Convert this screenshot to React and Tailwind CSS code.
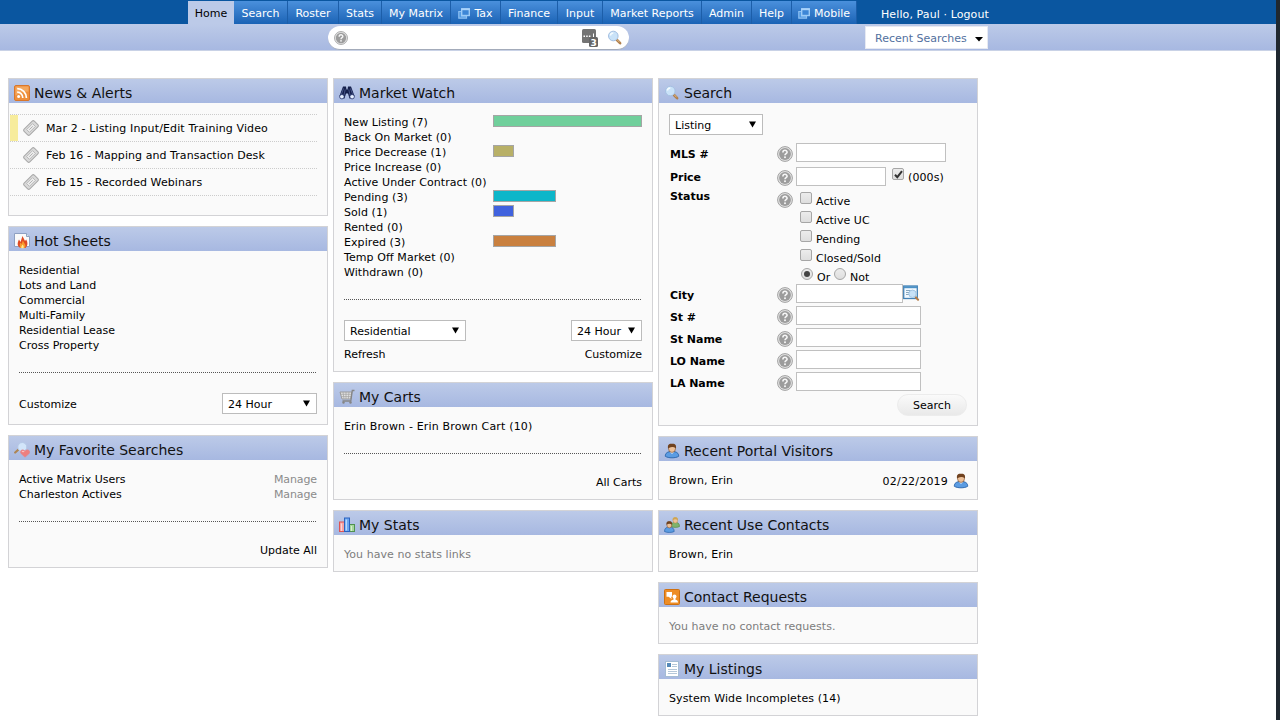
import { useState } from "react";

const tabs = [
  { label: "Home", width: "w-[46px]", active: true },
  { label: "Search", width: "w-[54px]" },
  { label: "Roster", width: "w-[51px]" },
  { label: "Stats", width: "w-[43px]" },
  { label: "My Matrix", width: "w-[69px]" },
  { label: "Tax", width: "w-[50px]", popup: true },
  { label: "Finance", width: "w-[57px]" },
  { label: "Input", width: "w-[45px]" },
  { label: "Market Reports", width: "w-[99px]" },
  { label: "Admin", width: "w-[50px]" },
  { label: "Help", width: "w-[40px]" },
  { label: "Mobile", width: "w-[65px]", popup: true },
];

const news = [
  { text: "Mar 2 - Listing Input/Edit Training Video", tracking: "tracking-[0.13px]", isNew: true },
  { text: "Feb 16 - Mapping and Transaction Desk", tracking: "tracking-[0.06px]" },
  { text: "Feb 15 - Recorded Webinars", tracking: "tracking-[0.08px]" },
];

const hotSheets = [
  "Residential",
  "Lots and Land",
  "Commercial",
  "Multi-Family",
  "Residential Lease",
  "Cross Property",
];

const market = [
  { label: "New Listing", count: 7, width: 149, color: "#70cf9b" },
  { label: "Back On Market", count: 0 },
  { label: "Price Decrease", count: 1, width: 21, color: "#b8b067" },
  { label: "Price Increase", count: 0 },
  { label: "Active Under Contract", count: 0 },
  { label: "Pending", count: 3, width: 63, color: "#0db6c9" },
  { label: "Sold", count: 1, width: 21, color: "#4062de" },
  { label: "Rented", count: 0 },
  { label: "Expired", count: 3, width: 63, color: "#c9803f" },
  { label: "Temp Off Market", count: 0 },
  { label: "Withdrawn", count: 0 },
];

function PopupIcon() {
  return (
    <svg width="12" height="11" viewBox="0 0 12 11" className="mr-1 shrink-0">
      <path d="M.8 3.500v6.700h7.700V8H3.500V3.500z" fill="#4f98e2" stroke="#8cc0f2" strokeWidth="1.200" />
      <rect x="3.700" y="1" width="7.600" height="6.500" fill="#3d86d6" stroke="#9ccbf7" strokeWidth="1.400" />
      <path d="M3.200 1.200h8.600" stroke="#a9d3fa" strokeWidth="2" />
    </svg>
  );
}

function HelpIcon({ size = 16 }) {
  return (
    <svg width={size} height={size} viewBox="0 0 16 16" className="block shrink-0">
      <circle cx="8" cy="8" r="7.400" fill="#e4e4e4" stroke="#999" strokeWidth="0.900" />
      <circle cx="8" cy="8" r="5.900" fill="#9c9c9c" />
      <path
        d="M5.900 6.500c0-2.900 4.200-2.800 4.200-.3C10.100 7.700 8 7.600 8 9.300"
        fill="none"
        stroke="#f6f6f6"
        strokeWidth="1.600"
      />
      <rect x="7.100" y="10.400" width="1.800" height="1.700" fill="#f6f6f6" />
    </svg>
  );
}

function MagnifierIcon() {
  return (
    <svg width="16" height="16" viewBox="0 0 16 16" className="block shrink-0">
      <path d="M9.500 9.500l3.600 3.700" stroke="#b07f4c" strokeWidth="2.600" strokeLinecap="round" />
      <path d="M9.800 9.300l2.800 3" stroke="#dfba85" strokeWidth="1" />
      <circle cx="6.300" cy="6" r="4.800" fill="#c9e2f8" stroke="#a5c0e2" strokeWidth="1" />
      <path d="M3.300 5.500a3.200 3.200 0 0 1 3-2.500" stroke="#f4fbff" strokeWidth="1.500" fill="none" />
    </svg>
  );
}

function RssIcon() {
  return (
    <svg width="16" height="16" viewBox="0 0 16 16">
      <rect x=".5" y=".5" width="15" height="15" rx="1.500" fill="#ee8f3c" stroke="#d9772c" />
      <path d="M1.500 1.500h13v5q-7 0-13 4z" fill="#f6b26e" opacity=".7" />
      <circle cx="4.600" cy="11.500" r="1.500" fill="#fff" />
      <path d="M3.200 7.200a5.600 5.600 0 0 1 5.600 5.800M3.200 3.700a9.200 9.200 0 0 1 9.200 9.300" fill="none" stroke="#fff" strokeWidth="1.700" />
    </svg>
  );
}

function FlameIcon() {
  return (
    <svg width="16" height="16" viewBox="0 0 16 16">
      <path d="M.5.500h12l3 3v10H.5z" fill="#fafafa" stroke="#8ea0c2" />
      <path d="M12.500.500v3h3" fill="#d5dfec" stroke="#8fa2c0" />
      <path d="M5.500 14.500C2.500 12 4 8.500 5 6.500l1.500 2.500L8.500 3l2.500 5 1.200-1.500c1.800 3 1.800 6-.7 8.500z" fill="#df4a22" />
      <path d="M6.500 15C5 13 6 10.500 6.500 9.500l1.200 1.500 1.100-3.500 2 3.500c1.200 1.500.7 3-.3 4z" fill="#f79a2c" />
      <path d="M7.500 15.300c-.8-1.300.2-2.500 1.100-3.800 1.200 1.500 1.400 2.500.9 3.800z" fill="#ffe98c" />
    </svg>
  );
}

function FavoriteIcon() {
  return (
    <svg width="16" height="16" viewBox="0 0 16 16">
      <path d="M4.500 7.500L1.200 10.500" stroke="#ae8554" strokeWidth="2.200" strokeLinecap="round" />
      <circle cx="8.300" cy="5" r="4.500" fill="#d2e5fa" stroke="#b5c8e6" />
      <path d="M11 15.200L6.700 11.200c-1.200-2.800 2-4.700 4.300-2.200 2.300-2.500 5.700-.5 4.500 2.200z" fill="#ee7f7f" stroke="#e08790" strokeWidth=".5" />
      <path d="M8 9.700q1-.9 2.200.2" stroke="#fac1c0" strokeWidth="1.200" fill="none" />
    </svg>
  );
}

function BinocularsIcon() {
  return (
    <svg width="16" height="16" viewBox="0 0 16 16">
      <path d="M4 1.500h3l.5 3h1l.5-3h3L15.500 11 14 13.500h-3.500L9 8.500H7L5.500 13.500H2L.5 11z" fill="#15204c" />
      <path d="M4.500 3.500L2.300 9.500M6.200 4.500l-1.300 6M11.500 3.500l2.200 6M9.800 4.500l1.300 6" stroke="#6a7bb0" strokeWidth=".6" />
      <ellipse cx="2.900" cy="11.700" rx="2.300" ry="2.200" fill="#e5efff" stroke="#26356c" strokeWidth=".8" />
      <ellipse cx="13.100" cy="11.700" rx="2.300" ry="2.200" fill="#e5efff" stroke="#26356c" strokeWidth=".8" />
    </svg>
  );
}

function CartIcon() {
  return (
    <svg width="16" height="16" viewBox="0 0 16 16">
      <path d="M1 3h11.800l-1 7H3z" fill="#e2e2e2" stroke="#9a9a9a" />
      <path d="M1.500 5.300h11M2.300 7.600h9.700M4 3l1 7M7 3v7M10 3l-.7 7" stroke="#a2a2a2" strokeWidth=".7" />
      <path d="M15.500 1.500h-2.200l-1.500 10.500H3.500" fill="none" stroke="#858585" strokeWidth="1.300" />
      <circle cx="4.500" cy="13.500" r="1.200" fill="#858585" />
      <circle cx="11.500" cy="13.500" r="1.200" fill="#858585" />
    </svg>
  );
}

function StatsIcon() {
  return (
    <svg width="16" height="16" viewBox="0 0 16 16">
      <rect x=".5" y="5" width="5" height="9.500" fill="#f6a3a3" stroke="#de5252" />
      <rect x="10.500" y="7.500" width="5" height="7" fill="#a5d79c" stroke="#4f9150" />
      <rect x="5.500" y="1" width="5" height="13.500" fill="#6ba6f2" stroke="#2b63bf" />
      <path d="M7.300 2.500v11" stroke="#bcdcff" strokeWidth="1.300" />
      <path d="M2.500 6.500v7.500M12.500 9v5" stroke="#fff" strokeWidth=".8" opacity=".7" />
    </svg>
  );
}

function PersonIcon() {
  return (
    <svg width="16" height="16" viewBox="0 0 16 16" className="block shrink-0">
      <path d="M1.300 13.300c0-3.200 2-4.800 6.700-4.800s6.700 1.600 6.700 4.800c-3 2-10.400 2-13.400 0z" fill="#5b9ce2" stroke="#2862a8" strokeWidth=".9" />
      <path d="M5.500 8.500l2.500 2.500 2.500-2.500z" fill="#e5f0fc" />
      <ellipse cx="8" cy="5.600" rx="3.500" ry="3.800" fill="#edc19a" stroke="#724322" strokeWidth=".6" />
      <path d="M4 5.500C3.300.600 6 .7 8 .7s4.700-.1 4 4.800Q10.500 4 8 4.100T4 5.500z" fill="#70421f" />
    </svg>
  );
}

function PeopleIcon() {
  return (
    <svg width="16" height="16" viewBox="0 0 16 16">
      <path d="M7 9.500c0-3 1.500-4.200 4.200-4.200S15.500 6.500 15.500 9.500c-2 1.200-6.500 1.200-8.500 0z" fill="#7fb36c" stroke="#568948" strokeWidth=".7" />
      <ellipse cx="11.300" cy="3.400" rx="2.300" ry="2.700" fill="#edc19a" stroke="#b88d45" strokeWidth=".5" />
      <path d="M8.700 3.300C8.500.2 10 .3 11.300.3s2.800 0 2.600 3q-2.600-2-5.200 0z" fill="#d0a650" />
      <path d="M.5 14.500C.5 11.500 2 10 5.300 10s4.900 1.500 4.900 4.500c-2.300 1.300-7.400 1.300-9.700 0z" fill="#5b9ce2" stroke="#2862a8" strokeWidth=".7" />
      <ellipse cx="5.300" cy="7.900" rx="2.500" ry="3" fill="#edc19a" stroke="#724322" strokeWidth=".5" />
      <path d="M2.500 7.800c-.3-3.400 1.200-3.500 2.800-3.500s3.100.1 2.800 3.500q-2.800-2-5.600 0z" fill="#70421f" />
    </svg>
  );
}

function RequestsIcon() {
  return (
    <svg width="16" height="16" viewBox="0 0 16 16">
      <rect x=".5" y=".5" width="15" height="15" rx="1" fill="#ee8d25" stroke="#ce7011" />
      <path d="M2.500 3h5.500v4.700H7l.8 2.300L4.500 7.700h-2z" fill="#fff" />
      <circle cx="10.500" cy="7.500" r="2" fill="#fff" />
      <path d="M6.500 13.500c0-2 1.500-2.500 3-2.800V9h2v1.700c1.500.3 2.500.8 2.500 2.800z" fill="#fff" />
    </svg>
  );
}

function ListingsIcon() {
  return (
    <svg width="16" height="16" viewBox="0 0 16 16">
      <rect x="1.500" y=".5" width="13" height="15" fill="#fff" stroke="#a4bcd4" />
      <rect x="3" y="2" width="4" height="4" fill="#5589b9" />
      <path d="M8 3.500h5M8 5.500h5M4 8.500h9M4 10.500h9M4 12.500h9" stroke="#b4c7d9" />
    </svg>
  );
}

function LookupIcon() {
  return (
    <svg width="17" height="17" viewBox="0 0 17 17" className="block shrink-0">
      <rect x=".7" y="2" width="13.600" height="12.500" fill="#f2f9ff" stroke="#4482b6" strokeWidth="1.300" />
      <path d="M1 3.200h13" stroke="#4c91c6" strokeWidth="2" />
      <path d="M3 6.500h8M3 8.500h3M3 10.500h3" stroke="#87a6be" />
      <path d="M12.500 13l2.600 2.800" stroke="#b47c49" strokeWidth="2" strokeLinecap="round" />
      <circle cx="9.500" cy="9.800" r="3.700" fill="#c7e2f8" stroke="#a3c6e4" />
    </svg>
  );
}

function TicketIcon() {
  return (
    <svg width="16" height="16" viewBox="0 0 16 16" className="block shrink-0">
      <g transform="rotate(-45 8 8)">
        <rect x=".8" y="4" width="14.400" height="8" rx="1.500" fill="#dadada" stroke="#a8a8a8" />
        <rect x="3.800" y="6" width="8.400" height="4" fill="#ededed" stroke="#b0b0b0" strokeWidth=".8" />
        <path d="M5.500 8h5" stroke="#a8a8a8" strokeWidth=".8" />
      </g>
    </svg>
  );
}

function Panel({ title, icon, height, children }) {
  return (
    <section className={`${height} flex flex-col border border-[#d3d3d6] bg-[#fafafa]`}>
      <h2 className="flex h-6 shrink-0 items-center bg-linear-to-b from-[#bccae8] to-[#a7b8e1] pl-[5px] pt-1 text-[14px] leading-5 text-[#111]">
        <span className="mr-1 h-4 w-4 shrink-0">{icon}</span>
        {title}
      </h2>
      <div className="flex flex-1 flex-col px-[10px] pt-[12px]">{children}</div>
    </section>
  );
}

function Divider() {
  return (
    <div className="mt-[19px] h-px shrink-0 bg-[repeating-linear-gradient(90deg,#555_0_1px,transparent_1px_2px)]" />
  );
}

function Select({ value, className }) {
  return (
    <button className={`flex h-[21px] items-center justify-between border border-[#bcbcbc] bg-white pl-[5px] pr-[6px] ${className}`}>
      <span className="pt-0.5">{value}</span>
      <svg width="7" height="7" viewBox="0 0 7 7" className="mb-px">
        <path d="M0 .5h7L3.500 6.500z" fill="#000" />
      </svg>
    </button>
  );
}

function Box({ round, checked, onClick }) {
  return (
    <button
      onClick={onClick}
      className={`flex h-3 w-3 shrink-0 items-center justify-center border border-[#a6a6a6] bg-linear-to-b from-[#ececec] to-[#dedede] ${round ? "rounded-full" : "rounded-[2px]"}`}
    >
      {checked && round && <span className="h-1.5 w-1.5 rounded-full bg-[#444]" />}
      {checked && !round && (
        <svg width="9" height="9" viewBox="0 0 9 9">
          <path d="M1 4.700l2.300 2.500L8 1.200" fill="none" stroke="#333" strokeWidth="2" />
        </svg>
      )}
    </button>
  );
}

function Field({ label, height = "h-[22px]", labelPad = "pt-1", iconPad = "pt-[3px]", children }) {
  return (
    <div className={`grid grid-cols-[107px_19px_1fr] pl-px ${height}`}>
      <span className={`font-bold tracking-[-0.05px] ${labelPad}`}>{label}</span>
      <span className={iconPad}>
        <HelpIcon />
      </span>
      <div>{children}</div>
    </div>
  );
}

function Input({ className }) {
  return <input className={`block h-[19px] border border-[#c0c0c0] bg-white outline-none ${className}`} />;
}

function Header() {
  return (
    <header>
      <div className="flex h-6 items-end bg-[#0a56a0] pl-[188px] text-white">
        {tabs.map((tab) => (
          <a
            key={tab.label}
            className={`flex h-[23px] shrink-0 items-center justify-center whitespace-nowrap pt-px ${tab.width} ${
              tab.active
                ? "bg-[#bccae8] text-black"
                : "border-r border-[#1c5ea9] bg-linear-to-b from-[#4a90dc] to-[#1a63b5]"
            }`}
          >
            {tab.popup && <PopupIcon />}
            {tab.label}
          </a>
        ))}
        <span className="ml-6 h-[17px] tracking-[0.1px]">Hello, Paul · Logout</span>
      </div>
      <div className="flex h-[27px] items-start border-b border-[#c9d2e6] bg-linear-to-b from-[#bccae8] to-[#a7b8e1] pl-[328px] pt-[2px]">
        <div className="flex h-6 w-[301px] items-center rounded-full border-b border-[#a3abba] bg-white pl-1.5">
          <HelpIcon size={14} />
          <input className="w-[233px] outline-none" />
          <svg width="18" height="18" viewBox="0 0 18 18" className="shrink-0">
            <rect x="1" y="0" width="14" height="14" rx="1.500" fill="#747474" />
            <path d="M2.500 7.300h8" stroke="#fff" strokeWidth="1.500" strokeDasharray="1.500 1.200" />
            <path d="M12.500 4.500v4" stroke="#fff" />
            <rect x="8" y="8" width="9" height="10" rx="1.500" fill="#666" />
            <text x="9.500" y="16.500" fontSize="9" fontWeight="bold" fill="#fff">3</text>
          </svg>
          <span className="ml-2">
            <MagnifierIcon />
          </span>
        </div>
        <button className="ml-[236px] flex h-[23px] w-[123px] items-center border border-[#e6e9f2] bg-white pl-[9px] text-[#52709e]">
          <span className="w-[100px] pt-px text-left">Recent Searches</span>
          <svg width="8" height="5" viewBox="0 0 8 5" className="mt-[3px]">
            <path d="M0 0h8L4 4.500z" fill="#000" />
          </svg>
        </button>
      </div>
    </header>
  );
}

function SearchPanel() {
  const [thousands, setThousands] = useState(true);
  const [mode, setMode] = useState("Or");
  const [statuses, setStatuses] = useState([]);

  const toggle = (name) =>
    setStatuses(statuses.includes(name) ? statuses.filter((s) => s !== name) : [...statuses, name]);

  return (
    <Panel title="Search" icon={<MagnifierIcon />} height="h-[348px]">
      <Select value="Listing" className="-mt-px w-[94px] shrink-0" />
      <div className="mt-2">
        <Field label="MLS #" height="h-6">
          <Input className="w-[150px]" />
        </Field>
        <Field label="Price" height="h-6" labelPad="pt-[3px]">
          <div className="flex">
            <Input className="w-[90px]" />
            <span className="ml-1.5 pt-px">
              <Box checked={thousands} onClick={() => setThousands(!thousands)} />
            </span>
            <span className="ml-1 pt-[3px] tracking-[0.1px]">(000s)</span>
          </div>
        </Field>
        <Field label="Status" height="h-[93px]" labelPad="-mt-[2px]" iconPad="pt-px">
          <div className="pl-1 pt-px">
            {["Active", "Active UC", "Pending", "Closed/Sold"].map((name) => (
              <div key={name} className="flex h-[19px]">
                <Box checked={statuses.includes(name)} onClick={() => toggle(name)} />
                <span className="ml-1 pt-[2px] tracking-[0.05px]">{name}</span>
              </div>
            ))}
            <div className="flex h-4 pl-px">
              <Box round checked={mode === "Or"} onClick={() => setMode("Or")} />
              <span className="ml-1 w-[17px] pt-[2px]">Or</span>
              <Box round checked={mode === "Not"} onClick={() => setMode("Not")} />
              <span className="ml-1 pt-[2px]">Not</span>
            </div>
          </div>
        </Field>
        <Field label="City">
          <div className="flex">
            <Input className="w-[107px]" />
            <LookupIcon />
          </div>
        </Field>
        {["St #", "St Name", "LO Name", "LA Name"].map((label) => (
          <Field key={label} label={label}>
            <Input className="w-[125px]" />
          </Field>
        ))}
      </div>
      <button className="h-[22px] w-[70px] shrink-0 self-end rounded-full border border-[#ececec] bg-linear-to-b from-[#fafafa] to-[#e9e9e9]">
        Search
      </button>
    </Panel>
  );
}

export default function App() {
  return (
    <div className="flex h-[720px] w-[1280px] overflow-hidden bg-white font-[Verdana,'DejaVu_Sans',sans-serif] text-[11px] leading-[15px] text-black">
      <div className="w-[1276px] shrink-0">
        <Header />
        <main className="flex items-start gap-[5px] pl-2 pt-[27px]">
          <div className="flex w-80 flex-col gap-2.5">
            <Panel title="News & Alerts" icon={<RssIcon />} height="h-[138px]">
              <ul className="-ml-[9px] -mt-px border-t border-dotted border-[#ccc]">
                {news.map((item) => (
                  <li key={item.text} className="flex h-[27px] items-center border-b border-dotted border-[#ccc]">
                    <span className={`mr-[5px] h-[26px] w-2 ${item.isNew ? "bg-[#f7ec9c]" : ""}`} />
                    <TicketIcon />
                    <span className={`ml-[7px] ${item.tracking}`}>{item.text}</span>
                  </li>
                ))}
              </ul>
            </Panel>
            <Panel title="Hot Sheets" icon={<FlameIcon />} height="h-[199px]">
              {hotSheets.map((name) => (
                <a key={name}>{name}</a>
              ))}
              <Divider />
              <div className="mt-5 flex items-center justify-between">
                <a className="pt-0.5">Customize</a>
                <Select value="24 Hour" className="w-[95px]" />
              </div>
            </Panel>
            <Panel title="My Favorite Searches" icon={<FavoriteIcon />} height="h-[133px]">
              {["Active Matrix Users", "Charleston Actives"].map((name) => (
                <div key={name} className="flex justify-between">
                  <a>{name}</a>
                  <a className="tracking-[-0.1px] text-[#8b8b8b]">Manage</a>
                </div>
              ))}
              <Divider />
              <a className="mt-[21px] self-end">Update All</a>
            </Panel>
          </div>

          <div className="flex w-80 flex-col gap-2.5">
            <Panel title="Market Watch" icon={<BinocularsIcon />} height="h-[294px]">
              {market.map((row) => (
                <div key={row.label} className="flex h-[15px] shrink-0">
                  <span className="w-[149px] whitespace-nowrap tracking-[0.07px]">
                    {row.label} ({row.count})
                  </span>
                  {row.count > 0 && (
                    <span
                      className="h-3 border border-[#a5a5a5]"
                      style={{ width: row.width, backgroundColor: row.color }}
                    />
                  )}
                </div>
              ))}
              <Divider />
              <div className="mt-5 flex justify-between">
                <Select value="Residential" className="w-[122px]" />
                <Select value="24 Hour" className="w-[71px]" />
              </div>
              <div className="mt-[6px] flex justify-between">
                <a>Refresh</a>
                <a className="tracking-[-0.05px]">Customize</a>
              </div>
            </Panel>
            <Panel title="My Carts" icon={<CartIcon />} height="h-[118px]">
              <a className="tracking-[0.17px]">Erin Brown - Erin Brown Cart (10)</a>
              <Divider />
              <a className="mt-[21px] self-end">All Carts</a>
            </Panel>
            <Panel title="My Stats" icon={<StatsIcon />} height="h-[62px]">
              <p className="tracking-[0.06px] text-[#7d7d7d]">You have no stats links</p>
            </Panel>
          </div>

          <div className="flex w-80 flex-col gap-2.5">
            <SearchPanel />
            <Panel title="Recent Portal Visitors" icon={<PersonIcon />} height="h-[64px]">
              <div className="flex items-start">
                <a className="tracking-[0.1px]">Brown, Erin</a>
                <span className="ml-auto mr-[5px] pt-px tracking-[0.2px]">02/22/2019</span>
                <span className="-mr-[2px]">
                  <PersonIcon />
                </span>
              </div>
            </Panel>
            <Panel title="Recent Use Contacts" icon={<PeopleIcon />} height="h-[62px]">
              <a className="tracking-[0.1px]">Brown, Erin</a>
            </Panel>
            <Panel title="Contact Requests" icon={<RequestsIcon />} height="h-[62px]">
              <p className="tracking-[0.02px] text-[#7d7d7d]">You have no contact requests.</p>
            </Panel>
            <Panel title="My Listings" icon={<ListingsIcon />} height="h-[62px]">
              <a className="tracking-[0.1px]">System Wide Incompletes (14)</a>
            </Panel>
          </div>
        </main>
      </div>
      <div className="w-1 bg-[#202830]" />
    </div>
  );
}
